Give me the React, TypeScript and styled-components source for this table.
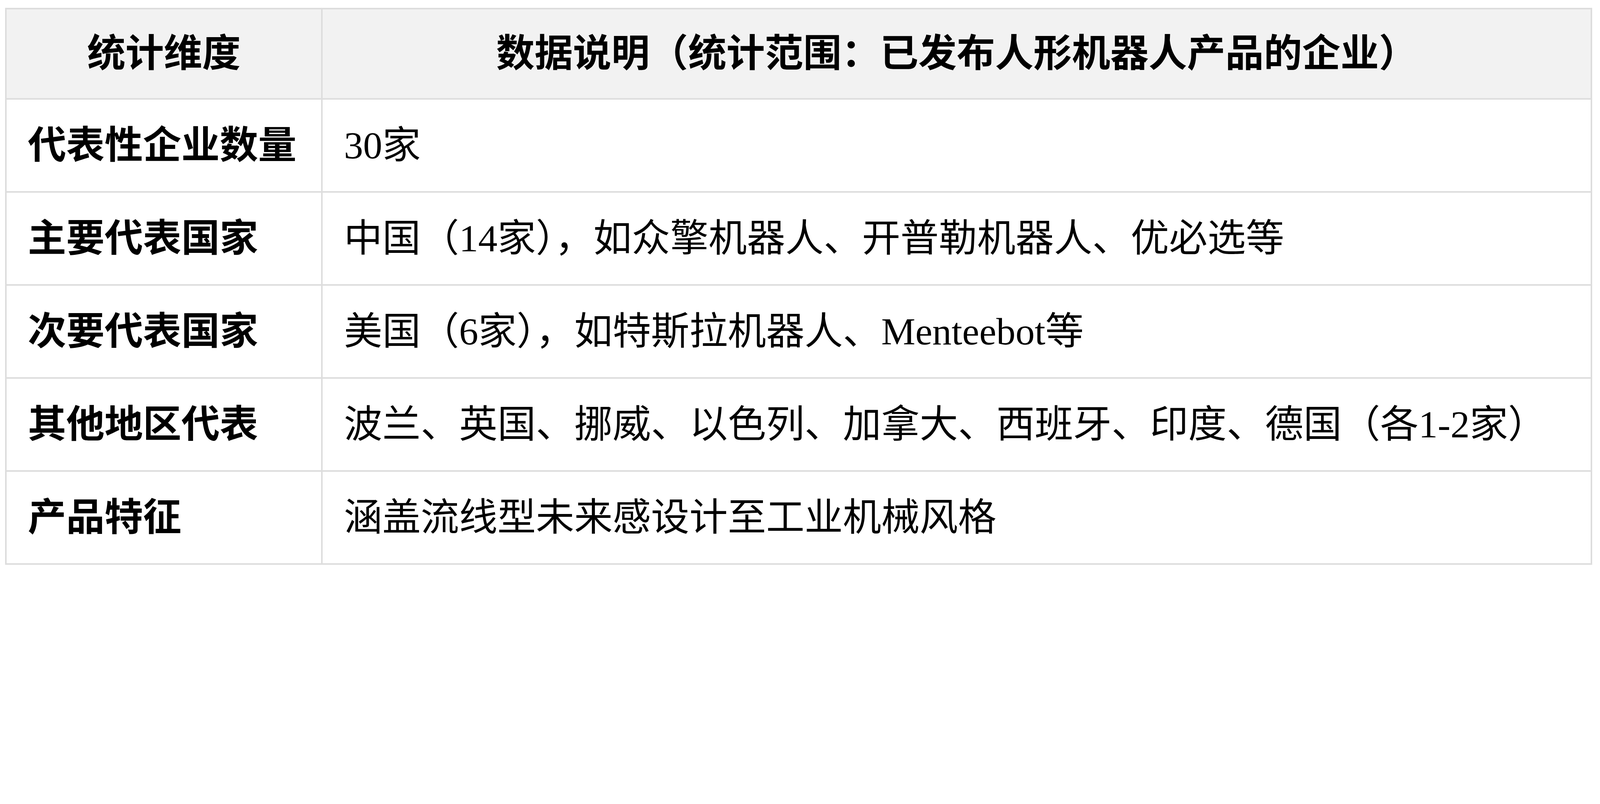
import React from "react";
import styled, { createGlobalStyle } from "styled-components";

const GlobalStyle = createGlobalStyle`
  :root {
    --u: calc(100vw / 5669);
  }
  html, body {
    margin: 0;
    padding: 0;
    background: #ffffff;
  }
  body {
    padding: calc(27 * var(--u)) 0 0 calc(18 * var(--u));
    font-family: "Liberation Serif", "Noto Sans CJK SC", serif;
    color: #000;
    overflow: hidden;
  }
`;

const Table = styled.table`
  width: calc(5624 * var(--u));
  border-collapse: collapse;
  table-layout: fixed;
  font-family: "Liberation Serif", "Noto Sans CJK SC", serif;
  font-size: calc(136 * var(--u));
  line-height: calc(200 * var(--u));
`;

const FirstCol = styled.col`
  width: calc(1120 * var(--u));
`;

const HeadCell = styled.th`
  background: #f2f2f2;
  border: calc(6 * var(--u)) solid #dddddd;
  padding: calc(58 * var(--u)) calc(75 * var(--u)) calc(57 * var(--u));
  font-weight: 700;
  text-align: center;
  white-space: nowrap;
`;

const Cell = styled.td<{ $bold?: boolean }>`
  border: calc(6 * var(--u)) solid #dddddd;
  padding: calc(62 * var(--u)) calc(75 * var(--u));
  font-weight: ${(p) => (p.$bold ? 700 : 400)};
  text-align: left;
  white-space: nowrap;
`;

const rows: [string, string][] = [
  ["代表性企业数量", "30家"],
  ["主要代表国家", "中国（14家），如众擎机器人、开普勒机器人、优必选等"],
  ["次要代表国家", "美国（6家），如特斯拉机器人、Menteebot等"],
  ["其他地区代表", "波兰、英国、挪威、以色列、加拿大、西班牙、印度、德国（各1-2家）"],
  ["产品特征", "涵盖流线型未来感设计至工业机械风格"],
];

export default function App() {
  return (
    <>
      <GlobalStyle />
      <Table>
        <colgroup>
          <FirstCol />
          <col />
        </colgroup>
        <thead>
          <tr>
            <HeadCell>统计维度</HeadCell>
            <HeadCell>数据说明（统计范围：已发布人形机器人产品的企业）</HeadCell>
          </tr>
        </thead>
        <tbody>
          {rows.map(([k, v]) => (
            <tr key={k}>
              <Cell $bold>{k}</Cell>
              <Cell>{v}</Cell>
            </tr>
          ))}
        </tbody>
      </Table>
    </>
  );
}
